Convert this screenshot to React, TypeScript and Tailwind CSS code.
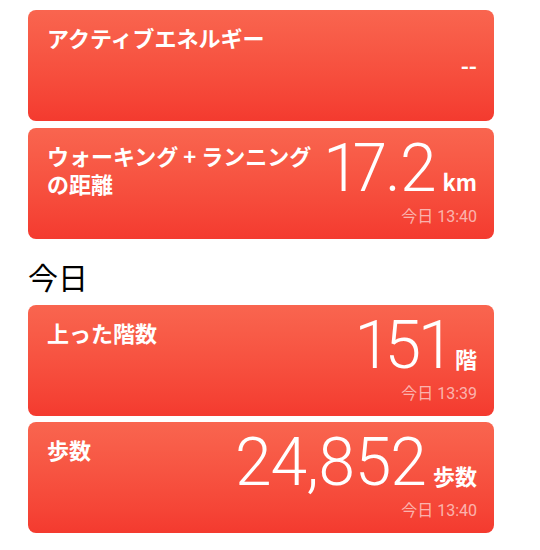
import React from "react";

const cjk = { fontFamily: '"Noto Sans CJK JP", "Noto Sans", sans-serif' };
const num = { fontFamily: 'Roboto, "Noto Sans CJK JP", sans-serif' };

type CardProps = {
  title: React.ReactNode;
  value?: string;
  unit: string;
  time?: string;
};

function Card({ title, value, unit, time }: CardProps) {
  return (
    <div className="flex h-[111px] w-[466px] justify-between rounded-[8px] bg-linear-to-b from-[#f9654f] to-[#f43a2f] pl-[19px] pr-[17px] pt-[8px] text-white">
      <div className="mt-[5px] text-[22px] font-bold leading-[28px]" style={cjk}>
        {title}
      </div>
      <div className="flex flex-col items-end">
        {value ? (
          <div className="flex h-[66px] items-baseline">
            <span className="text-[66px] font-light leading-[66px] tracking-[-1px] proportional-nums" style={num}>
              {value}
            </span>
            <span className="ml-[7px] text-[22px] font-bold leading-[28px]" style={cjk}>
              {unit}
            </span>
          </div>
        ) : (
          <div className="flex h-[66px] items-end pb-[6px]">
            <span className="text-[22px] font-bold leading-[28px]" style={cjk}>
              {unit}
            </span>
          </div>
        )}
        {time && (
          <div className="mt-[5px] text-[16px] leading-[20px] text-white/60" style={num}>
            {time}
          </div>
        )}
      </div>
    </div>
  );
}

export default function App() {
  return (
    <div className="min-h-[550px] w-[540px] bg-white pl-[28px] pt-[10px]">
      <div className="flex flex-col gap-[7px]">
        <Card title="アクティブエネルギー" unit="--" />
        <Card
          title={
            <>
              <div>ウォーキング + ランニング</div>
              <div>の距離</div>
            </>
          }
          value="17.2"
          unit="km"
          time="今日 13:40"
        />
      </div>
      <div className="mb-[11px] mt-[19px] text-[30px] leading-[36px] text-black" style={cjk}>
        今日
      </div>
      <div className="flex flex-col gap-[6px]">
        <Card title="上った階数" value="151" unit="階" time="今日 13:39" />
        <Card title="歩数" value="24,852" unit="歩数" time="今日 13:40" />
      </div>
    </div>
  );
}
